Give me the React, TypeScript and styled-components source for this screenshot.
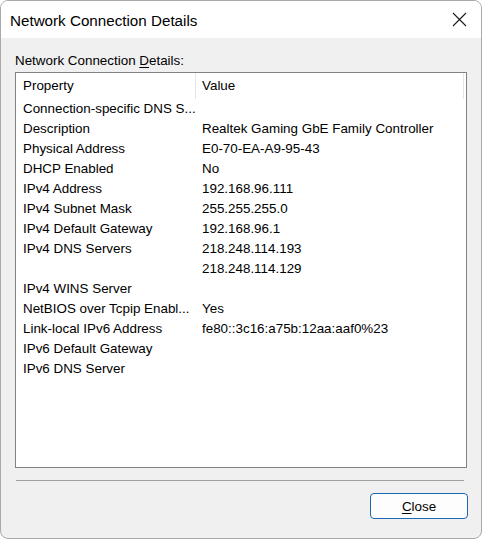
import React from "react";
import styled, { createGlobalStyle } from "styled-components";

const Global = createGlobalStyle`
  html, body { margin: 0; padding: 0; background: #ffffff; }
  * { box-sizing: border-box; }
`;

const Window = styled.div`
  width: 482px;
  height: 539px;
  border: 1px solid #a9a9a9;
  border-radius: 8px;
  overflow: hidden;
  background: #f0f0f0;
  display: flex;
  flex-direction: column;
  font-family: "Liberation Sans", Arial, sans-serif;
  color: #000;
`;

const TitleBar = styled.div`
  height: 37px;
  background: #ffffff;
  display: flex;
  align-items: center;
  justify-content: space-between;
  padding: 0 14px 0 9px;
  flex-shrink: 0;
`;

const Title = styled.div`
  font-size: 15.2px;
  margin-top: 1px;
`;

const CloseIcon = styled.svg`
  width: 15px;
  height: 15px;
`;

const Body = styled.div`
  flex: 1;
  display: flex;
  flex-direction: column;
  padding: 13px 14px 20px 14px;
`;

const Label = styled.div`
  font-size: 13.4px;
  line-height: 20px;
  height: 20px;
  margin-bottom: 1px;
  u { text-decoration: underline; text-underline-offset: 2px; }
`;

const ListBox = styled.div`
  height: 396px;
  background: #ffffff;
  border: 1px solid #828282;
  display: flex;
  flex-direction: column;
`;

const HeaderRow = styled.div`
  display: grid;
  grid-template-columns: 180px 268px;
  height: 25px;
`;

const HeaderCell = styled.div<{ $first?: boolean }>`
  font-size: 13.4px;
  line-height: 26px;
  padding-left: ${(p) => (p.$first ? "7px" : "6px")};
  border-right: 1px solid #e5e5e5;
`;

const Row = styled.div`
  display: grid;
  grid-template-columns: 180px 1fr;
  height: 20px;
`;

const Cell = styled.div<{ $first?: boolean }>`
  font-size: 13.4px;
  line-height: 20px;
  padding-top: 1px;
  padding-left: ${(p) => (p.$first ? "7px" : "6px")};
  white-space: nowrap;
`;

const Separator = styled.div`
  height: 1px;
  background: #a0a0a0;
  margin: 12px 3px 0 1px;
`;

const Footer = styled.div`
  display: flex;
  justify-content: flex-end;
  margin-top: 12px;
`;

const Button = styled.button`
  width: 98px;
  height: 26px;
  border: 1px solid #1a66b3;
  border-radius: 4px;
  background: #fdfdfd;
  font-family: "Liberation Sans", Arial, sans-serif;
  font-size: 13.4px;
  color: #000;
  padding: 0;
  margin-right: -1px;
  u { text-decoration: underline; text-underline-offset: 2px; }
`;

const rows: [string, string][] = [
  ["Connection-specific DNS S...", ""],
  ["Description", "Realtek Gaming GbE Family Controller"],
  ["Physical Address", "E0-70-EA-A9-95-43"],
  ["DHCP Enabled", "No"],
  ["IPv4 Address", "192.168.96.111"],
  ["IPv4 Subnet Mask", "255.255.255.0"],
  ["IPv4 Default Gateway", "192.168.96.1"],
  ["IPv4 DNS Servers", "218.248.114.193"],
  ["", "218.248.114.129"],
  ["IPv4 WINS Server", ""],
  ["NetBIOS over Tcpip Enabl...", "Yes"],
  ["Link-local IPv6 Address", "fe80::3c16:a75b:12aa:aaf0%23"],
  ["IPv6 Default Gateway", ""],
  ["IPv6 DNS Server", ""],
];

export default function App() {
  return (
    <>
      <Global />
      <Window>
        <TitleBar>
          <Title>Network Connection Details</Title>
          <CloseIcon viewBox="0 0 15 15">
            <path d="M1 1 L14 14 M14 1 L1 14" stroke="#1a1a1a" strokeWidth="1.1" fill="none" />
          </CloseIcon>
        </TitleBar>
        <Body>
          <Label>
            Network Connection <u>D</u>etails:
          </Label>
          <ListBox>
            <HeaderRow>
              <HeaderCell $first>Property</HeaderCell>
              <HeaderCell>Value</HeaderCell>
            </HeaderRow>
            {rows.map(([k, v], i) => (
              <Row key={i}>
                <Cell $first>{k}</Cell>
                <Cell>{v}</Cell>
              </Row>
            ))}
          </ListBox>
          <Separator />
          <Footer>
            <Button>
              <u>C</u>lose
            </Button>
          </Footer>
        </Body>
      </Window>
    </>
  );
}
